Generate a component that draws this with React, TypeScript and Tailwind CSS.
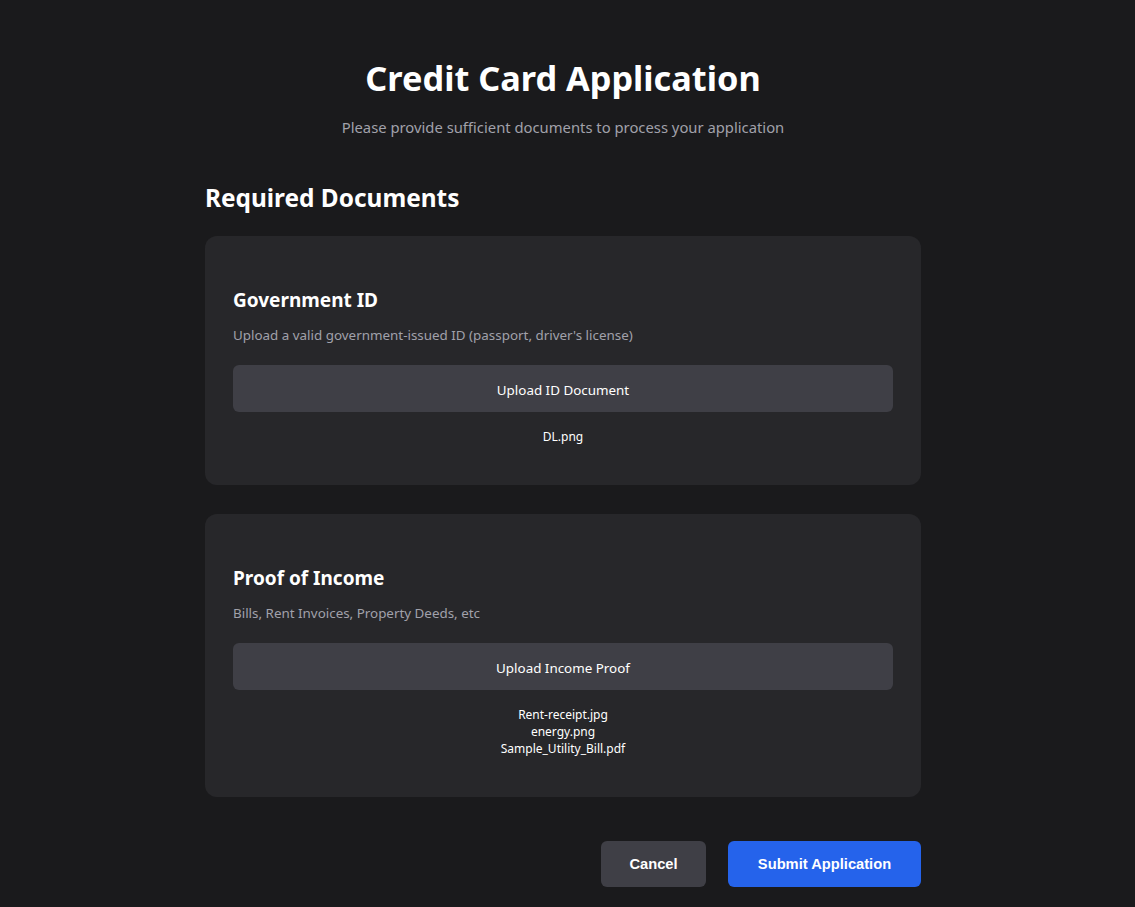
import React from 'react'

const docs = [
  {
    title: 'Government ID',
    description: "Upload a valid government-issued ID (passport, driver's license)",
    button: 'Upload ID Document',
    files: ['DL.png'],
  },
  {
    title: 'Proof of Income',
    description: 'Bills, Rent Invoices, Property Deeds, etc',
    button: 'Upload Income Proof',
    files: ['Rent-receipt.jpg', 'energy.png', 'Sample_Utility_Bill.pdf'],
  },
]

const App = () => {
  return (
    <div className="min-h-screen bg-[#1a1a1c] text-white font-['Noto_Sans',sans-serif]">
      <div className="flex justify-center pr-[9px]">
        <div className="w-[716px] pt-[52px] pb-5">
          {/* Header */}
          <div className="text-center">
            <h1 className="text-[34.3px] leading-[52px] font-bold">Credit Card Application</h1>
            <p className="mt-[11px] text-[14.8px] leading-6 text-[#a1a1aa]">
              Please provide sufficient documents to process your application
            </p>
          </div>

          <h2 className="mt-[43px] text-[24.4px] leading-8 font-bold">Required Documents</h2>

          <div className="mt-[22px] flex flex-col gap-[29px]">
            {docs.map((doc) => (
              <div key={doc.title} className="rounded-xl bg-[#27272a] px-7 pt-[50px] pb-[40px]">
                <h3 className="text-[19px] leading-7 font-bold">{doc.title}</h3>
                <p className="mt-[11px] text-[13.4px] leading-5 text-[#a1a1aa]">{doc.description}</p>
                <button className="mt-5 h-[47px] w-full rounded-md bg-[#3f3f46] pt-[3px] text-[13.4px] text-white">
                  {doc.button}
                </button>
                <div className="mt-[16px] text-center text-[12px] leading-[17px]">
                  {doc.files.map((f) => (
                    <div key={f}>{f}</div>
                  ))}
                </div>
              </div>
            ))}
          </div>

          {/* Actions */}
          <div className="mt-[44px] flex justify-end gap-[22px] font-['Liberation_Sans',sans-serif] text-[14.7px] font-bold">
            <button className="h-[46px] w-[105px] rounded-md bg-[#3f3f46] text-white">Cancel</button>
            <button className="h-[46px] w-[193px] rounded-md bg-[#2563eb] text-white">Submit Application</button>
          </div>
        </div>
      </div>
    </div>
  )
}

export default App
